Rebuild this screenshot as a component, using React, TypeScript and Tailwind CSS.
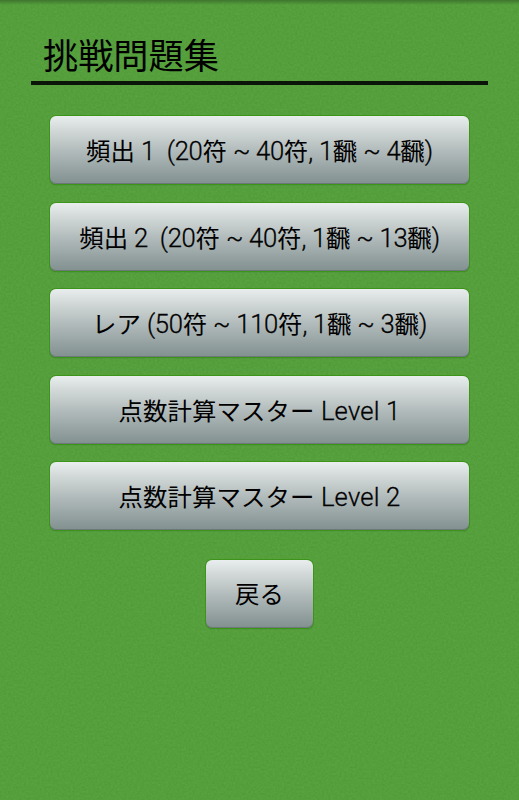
const levels = [
  '頻出 1  (20符 ~ 40符, 1飜 ~ 4飜)',
  '頻出 2  (20符 ~ 40符, 1飜 ~ 13飜)',
  'レア (50符 ~ 110符, 1飜 ~ 3飜)',
  '点数計算マスター Level 1',
  '点数計算マスター Level 2',
];

function Label({ text }: { text: string }) {
  return (
    <span>
      {text.split(/([ -~]+)/).map((run, i) =>
        /^[ -~]+$/.test(run) ? (
          <span
            key={i}
            className={`text-[25.6px] font-light [-webkit-text-stroke:0.3px_black] ${run.includes('Level') ? 'tracking-[0.2px]' : 'tracking-[-0.3px]'}`}
          >
            {run}
          </span>
        ) : (
          <span key={i}>{run}</span>
        ),
      )}
    </span>
  );
}

function MenuButton({ text, className }: { text: string; className: string }) {
  return (
    <button
      className={`flex h-[68px] items-center justify-center rounded-[6px] bg-linear-to-b from-[#e9eded] via-[#b3bcbc] to-[#829090] pt-[4px] text-[24.4px] leading-none tracking-[0.1px] whitespace-pre text-black shadow-[0_0_0_1px_#3c9418,0_1px_1px_#44604a,inset_0_-1px_0_#6b7979] ${className}`}
    >
      <Label text={text} />
    </button>
  );
}

export default function App() {
  return (
    <main className="relative isolate h-[800px] w-full overflow-hidden bg-[#52a238] font-['Roboto','Noto_Sans_CJK_JP',sans-serif]">
      <svg className="absolute inset-0 -z-10 h-full w-full opacity-[0.07]" aria-hidden="true">
        <filter id="felt" x="0" y="0" width="100%" height="100%" colorInterpolationFilters="sRGB">
          <feTurbulence type="fractalNoise" baseFrequency="0.45" numOctaves="2" seed="4" />
          <feColorMatrix type="saturate" values="0" />
          <feComponentTransfer>
            <feFuncA type="linear" slope="0" intercept="1" />
          </feComponentTransfer>
        </filter>
        <rect width="100%" height="100%" filter="url(#felt)" />
      </svg>
      <div className="h-[5px] bg-linear-to-b from-[#3f752e] to-transparent" />
      <header className="mr-[31px] ml-[31px] h-20 border-b-4 border-[#0b1409] pt-[32px] pl-[12px]">
        <h1 className="text-[35.2px] leading-[40px] text-black">挑戦問題集</h1>
      </header>
      <nav className="mt-[31px] flex flex-col items-center gap-[18.5px] px-[50px]">
        {levels.map((level) => (
          <MenuButton key={level} text={level} className="w-full" />
        ))}
        <MenuButton text="戻る" className="mt-[11px] w-[107px]" />
      </nav>
    </main>
  );
}
